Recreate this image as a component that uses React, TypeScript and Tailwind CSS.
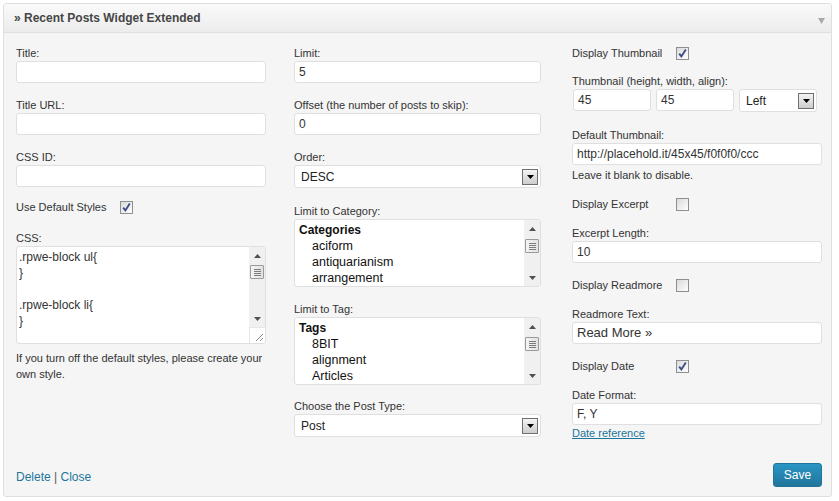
import React from "react";

const Label: React.FC<{ children: React.ReactNode }> = ({ children }) => (
  <div className="text-[11px] leading-[16px] text-[#333]">{children}</div>
);

const TextInput: React.FC<{ value?: string; className?: string; textClass?: string }> = ({
  value = "",
  className = "w-full",
  textClass = "text-[12px]",
}) => (
  <div
    className={`h-[22px] border border-[#dfdfdf] rounded-[3px] bg-white px-[4px] flex items-center text-[#333] ${textClass} ${className}`}
  >
    {value}
  </div>
);

const DropButton = () => (
  <div className="w-[16px] h-[16px] border border-[#6f6f6f] bg-linear-to-b from-[#f4f4f4] to-[#cdcdcd] flex items-center justify-center">
    <svg width="7" height="4" viewBox="0 0 7 4">
      <path d="M0 0h7L3.5 4z" fill="#000" />
    </svg>
  </div>
);

const Select: React.FC<{ value: string; className?: string }> = ({ value, className = "w-full" }) => (
  <div
    className={`h-[23px] border border-[#dfdfdf] rounded-[3px] bg-white pl-[6px] pr-[2px] flex items-center justify-between text-[12px] text-[#222] ${className}`}
  >
    <span>{value}</span>
    <DropButton />
  </div>
);

const Arrow: React.FC<{ down?: boolean }> = ({ down }) => (
  <div className="h-[17px] flex items-center justify-center">
    <svg width="7" height="4" viewBox="0 0 7 4">
      <path d={down ? "M0 0h7L3.5 4z" : "M0 4h7L3.5 0z"} fill="#505050" />
    </svg>
  </div>
);

const Thumb = () => (
  <div className="mx-[1px] h-[14px] border border-[#9a9a9a] rounded-[1px] bg-linear-to-r from-[#f4f4f4] to-[#e2e2e2] flex flex-col items-center justify-center gap-[1px]">
    <div className="w-[7px] h-px bg-[#7c7c7c]" />
    <div className="w-[7px] h-px bg-[#7c7c7c]" />
    <div className="w-[7px] h-px bg-[#7c7c7c]" />
    <div className="w-[7px] h-px bg-[#7c7c7c]" />
  </div>
);

const Scrollbar: React.FC<{ thumbTop?: number }> = () => (
  <div className="w-[16px] flex flex-col bg-[#f0f0f0]">
    <Arrow />
    <div className="mt-[2px]">
      <Thumb />
    </div>
    <div className="flex-1" />
    <Arrow down />
  </div>
);

const Checkbox: React.FC<{ checked?: boolean }> = ({ checked }) => (
  <div className="w-[13px] h-[13px] border border-[#8e8f8f] bg-linear-to-br from-[#dadada] to-white flex items-center justify-center">
    {checked && (
      <svg width="11" height="11" viewBox="0 0 11 11">
        <path d="M2.2 5.6 L4.4 8.4 L8.8 1.6" fill="none" stroke="#3d4e85" strokeWidth="1.9" />
      </svg>
    )}
  </div>
);

const CheckRow: React.FC<{ label: string; checked?: boolean; className?: string }> = ({
  label,
  checked,
  className = "",
}) => (
  <div className={`h-[16px] flex items-center ${className}`}>
    <span className="w-[104px] text-[11px] leading-[16px] text-[#333]">{label}</span>
    <Checkbox checked={checked} />
  </div>
);

const ListBox: React.FC<{ title: string; items: string[] }> = ({ title, items }) => (
  <div className="h-[68px] border border-[#dfdfdf] rounded-[3px] bg-white flex overflow-hidden">
    <div className="flex-1 pt-[2px] pl-[4px] text-[12px] leading-[16px] text-[#111]">
      <div className="font-bold">{title}</div>
      {items.map((i) => (
        <div key={i} className="pl-[13px] text-[12.5px]">
          {i}
        </div>
      ))}
    </div>
    <Scrollbar />
  </div>
);

export default function App() {
  return (
    <div className="w-[839px] h-[501px] bg-white pt-[3px] pl-[3px] font-['Liberation_Sans',Arial,sans-serif]">
      <div className="w-[829px] h-[494px] border border-[#dfdfdf] rounded-[3px] bg-[#f5f5f5] flex flex-col overflow-hidden">
        <div className="h-[29px] border-b border-[#dfdfdf] bg-linear-to-b from-[#fafafa] to-[#ececec] flex justify-between items-center pl-[10px] pr-[6px]">
          <span className="text-[12px] font-bold text-[#464646]">» Recent Posts Widget Extended</span>
          <svg width="7" height="6" viewBox="0 0 7 6" className="mt-[5px]">
            <path d="M0 0h7L3.5 6z" fill="#aaa" />
          </svg>
        </div>

        <div className="flex-1 flex flex-col pt-[12px] pl-[12px] pr-[9px] pb-[9px]">
          <div className="flex">
            {/* column 1 */}
            <div className="w-[250px] flex flex-col">
              <Label>Title:</Label>
              <TextInput />
              <div className="mt-[14px]">
                <Label>Title URL:</Label>
                <TextInput />
              </div>
              <div className="mt-[14px]">
                <Label>CSS ID:</Label>
                <TextInput />
              </div>
              <CheckRow label="Use Default Styles" checked className="mt-[12px]" />
              <div className="mt-[15px]">
                <Label>CSS:</Label>
                <div className="h-[98px] border border-[#dfdfdf] rounded-[3px] bg-white flex overflow-hidden">
                  <div className="flex-1 pt-[2px] pl-[2px] text-[12px] leading-[16px] text-[#333] whitespace-pre">
                    {".rpwe-block ul{\n}\n\n.rpwe-block li{\n}"}
                  </div>
                  <div className="w-[16px] flex flex-col">
                    <div className="flex-1 flex flex-col bg-[#f0f0f0]">
                      <Arrow />
                      <div className="mt-[1px]">
                        <Thumb />
                      </div>
                      <div className="flex-1" />
                      <Arrow down />
                    </div>
                    <div className="h-[16px] bg-white border-l border-t border-[#e6e6e6] flex items-end justify-end p-[2px]">
                      <svg width="7" height="7" viewBox="0 0 7 7">
                        <path d="M7 0L0 7M7 4L4 7" stroke="#8a8a8a" strokeWidth="1" />
                      </svg>
                    </div>
                  </div>
                </div>
              </div>
              <p className="mt-[6px] text-[11px] leading-[16px] text-[#333]">
                If you turn off the default styles, please create your own style.
              </p>
            </div>

            {/* column 2 */}
            <div className="w-[247px] ml-[28px] flex flex-col">
              <Label>Limit:</Label>
              <TextInput value="5" />
              <div className="mt-[14px]">
                <Label>Offset (the number of posts to skip):</Label>
                <TextInput value="0" />
              </div>
              <div className="mt-[14px]">
                <Label>Order:</Label>
                <Select value="DESC" />
              </div>
              <div className="mt-[15px]">
                <Label>Limit to Category:</Label>
                <ListBox title="Categories" items={["aciform", "antiquarianism", "arrangement"]} />
              </div>
              <div className="mt-[14px]">
                <Label>Limit to Tag:</Label>
                <ListBox title="Tags" items={["8BIT", "alignment", "Articles"]} />
              </div>
              <div className="mt-[13px]">
                <Label>Choose the Post Type:</Label>
                <Select value="Post" />
              </div>
            </div>

            {/* column 3 */}
            <div className="w-[250px] ml-[31px] flex flex-col">
              <CheckRow label="Display Thumbnail" checked />
              <div className="mt-[12px]">
                <Label>Thumbnail (height, width, align):</Label>
                <div className="flex gap-[5px] pl-[1px]">
                  <TextInput value="45" className="w-[78px]" />
                  <TextInput value="45" className="w-[78px]" />
                  <Select value="Left" className="w-[78px]" />
                </div>
              </div>
              <div className="mt-[15px]">
                <Label>Default Thumbnail:</Label>
                <TextInput value="http://placehold.it/45x45/f0f0f0/ccc" />
              </div>
              <div className="mt-[2px] text-[11px] leading-[16px] text-[#333]">Leave it blank to disable.</div>
              <CheckRow label="Display Excerpt" className="mt-[13px]" />
              <div className="mt-[13px]">
                <Label>Excerpt Length:</Label>
                <TextInput value="10" />
              </div>
              <CheckRow label="Display Readmore" className="mt-[14px]" />
              <div className="mt-[13px]">
                <Label>Readmore Text:</Label>
                <TextInput value="Read More »" textClass="text-[13px]" />
              </div>
              <CheckRow label="Display Date" checked className="mt-[14px]" />
              <div className="mt-[13px]">
                <Label>Date Format:</Label>
                <TextInput value="F, Y" />
              </div>
              <a className="text-[11px] leading-[16px] text-[#21759b] underline self-start">Date reference</a>
            </div>
          </div>

          <div className="mt-auto flex items-center justify-between">
            <div className="text-[12px] mt-[3px]">
              <a className="text-[#21759b]">Delete</a>
              <span className="text-[#555]"> | </span>
              <a className="text-[#21759b]">Close</a>
            </div>
            <button className="w-[49px] h-[24px] rounded-[3px] border border-[#21759b] bg-linear-to-b from-[#2a95c5] to-[#21759b] text-white text-[12px] mr-[0px]">
              Save
            </button>
          </div>
        </div>
      </div>
    </div>
  );
}
